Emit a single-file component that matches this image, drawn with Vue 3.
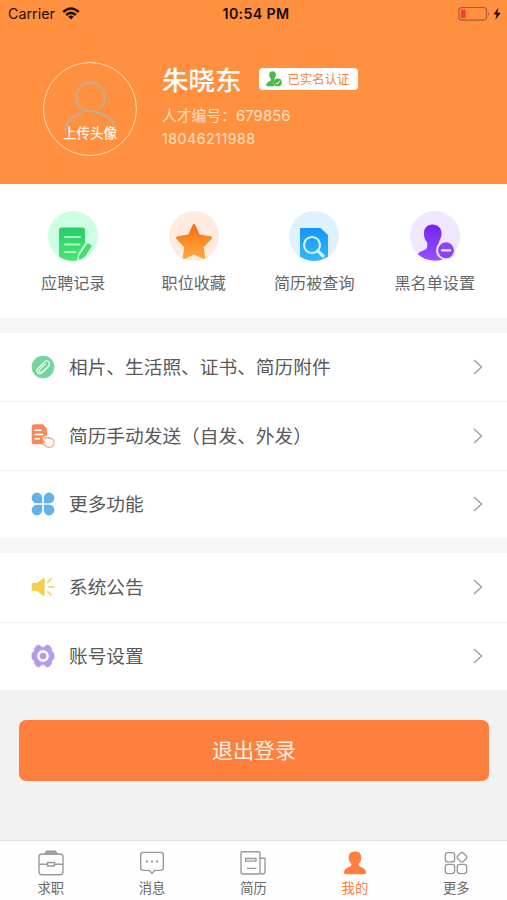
<script setup>
const shortcuts = [
  { id: 'records', label: '应聘记录' },
  { id: 'favorites', label: '职位收藏' },
  { id: 'viewed', label: '简历被查询' },
  { id: 'blacklist', label: '黑名单设置' },
]
const groups = [
  [
    { id: 'clip', label: '相片、生活照、证书、简历附件' },
    { id: 'send', label: '简历手动发送（自发、外发）' },
    { id: 'features', label: '更多功能' },
  ],
  [
    { id: 'notice', label: '系统公告' },
    { id: 'settings', label: '账号设置' },
  ],
]
const tabs = [
  { id: 'jobs', label: '求职' },
  { id: 'messages', label: '消息' },
  { id: 'resume', label: '简历' },
  { id: 'mine', label: '我的', active: true },
  { id: 'more', label: '更多' },
]
</script>

<template>
  <div class="screen">
    <header class="hero">
      <div class="status">
        <div class="carrier">
          <span>Carrier</span>
          <svg width="18" height="13" viewBox="0 0 18 13" fill="none" stroke="#241208" stroke-width="2.5">
            <path d="M1.2 5Q9-2 16.8 5M4.1 8Q9 3.7 13.9 8" />
            <path d="M6.2 9.7Q9 7.3 11.8 9.7L9 12.5Z" fill="#241208" stroke="none" />
          </svg>
        </div>
        <div class="clock">10:54 PM</div>
        <div class="power">
          <svg width="44" height="15" viewBox="0 0 44 15">
            <rect x=".7" y=".4" width="27.8" height="12.8" rx="3.2" fill="none" stroke="#a9602e" stroke-width="1.2" />
            <rect x="2.7" y="2.4" width="5" height="8.8" rx="1.2" fill="#fb3b3b" />
            <path d="M30 4.5Q32 6.8 30 9.1Z" fill="#a9602e" />
            <path d="M40.4 .7L35.5 7.5H38.6L37.2 13L42.8 5.7H39.5Z" fill="#1c0e05" />
          </svg>
        </div>
      </div>
      <div class="profile">
        <div class="avatar">
          <svg class="person" width="54" height="54" viewBox="0 0 54 54" fill="none" stroke="#bfae92" stroke-width="2">
            <path d="M36.4 26.1A14.3 14.3 0 1 0 27 29.2C39 29.2 48 36 51.5 44.5V50M19 30.8C10 33 2.5 40.5 2.5 50" />
          </svg>
          <span class="upload">上传头像</span>
        </div>
        <div class="identity">
          <div class="name-row">
            <span class="name">朱晓东</span>
            <span class="verified">
              <svg width="16" height="16" viewBox="0 0 16 16">
                <path d="M6.5.3C9 .3 10.2 2 9.8 4.6C9.6 6 9 6.8 8.5 7.5V9.4C7.3 11 7.6 13 9 15.3H.3C.1 12 1.4 11 4.8 9.8V7.7C3.5 6.4 3.2 5.3 3.3 3.5C3.4 1.3 4.5.3 6.5.3Z" fill="#49b94b" />
                <circle cx="11.9" cy="11.4" r="3.9" fill="#49b94b" />
                <path d="M9.9 11.7L11.3 13L14 9.9" fill="none" stroke="#fff" stroke-width="1" />
              </svg>
              <span class="verified-text">已实名认证</span>
            </span>
          </div>
          <div class="meta">人才编号：<span class="num">679856</span></div>
          <div class="phone">18046211988</div>
        </div>
      </div>
    </header>

    <nav class="shortcuts">
      <div v-for="s in shortcuts" :key="s.id" class="shortcut">
        <svg v-if="s.id === 'records'" width="50" height="50" viewBox="0 0 50 50">
          <defs>
            <linearGradient id="green" x2="0" y2="1"><stop stop-color="#27ce69" /><stop offset="1" stop-color="#4be673" /></linearGradient>
            <clipPath id="disc"><circle cx="25" cy="25" r="25" /></clipPath>
          </defs>
          <circle cx="25" cy="25" r="25" fill="#ccffe2" />
          <g clip-path="url(#disc)">
            <path d="M14 16.4H34Q37 16.4 37 19.4V32L30 43V50H11V19.4Q11 16.4 14 16.4Z" fill="url(#green)" />
            <path d="M17 26H32M17 33.5H31.5M17 41H27.5" stroke="#b4f7cb" stroke-width="1.9" stroke-linecap="round" />
          </g>
          <path d="M38.3 33Q39.5 31 41.5 32.2L43 33.2Q45 34.5 43.7 36.3L37.5 46Q34.5 48.8 29.5 49.3L31 43.5Z" fill="#4adc6f" stroke="#ccffe2" stroke-width="1.2" />
        </svg>
        <svg v-else-if="s.id === 'favorites'" width="50" height="50" viewBox="0 0 50 50">
          <defs><linearGradient id="orange" x2="0" y2="1"><stop stop-color="#f66d16" /><stop offset=".55" stop-color="#fa922b" /><stop offset="1" stop-color="#ffa540" /></linearGradient></defs>
          <circle cx="25" cy="25" r="25" fill="#ffebdf" />
          <path d="M25 14.4L29.8 24.5L41.8 26.8L33.4 35.8L35 46.8L25 42L15 46.8L16.6 35.8L8.2 26.8L20.2 24.5Z" fill="url(#orange)" stroke="url(#orange)" stroke-width="2.5" stroke-linejoin="round" />
        </svg>
        <svg v-else-if="s.id === 'viewed'" width="50" height="50" viewBox="0 0 50 50">
          <defs><linearGradient id="blue" x2="0" y2="1"><stop stop-color="#1895fb" /><stop offset="1" stop-color="#32b8fb" /></linearGradient></defs>
          <circle cx="25" cy="25" r="25" fill="#def1ff" />
          <g clip-path="url(#disc)">
            <path d="M11 17H31.5L39 24V50H11Z" fill="url(#blue)" />
            <circle cx="23" cy="34" r="8" fill="none" stroke="#d8f2ff" stroke-width="2.2" />
            <path d="M28.8 39.8L34 45" stroke="#d8f2ff" stroke-width="3.2" stroke-linecap="round" />
          </g>
        </svg>
        <svg v-else width="50" height="50" viewBox="0 0 50 50">
          <defs><linearGradient id="violet" x2="0" y2="1"><stop stop-color="#7224ef" /><stop offset="1" stop-color="#9a50ff" /></linearGradient></defs>
          <circle cx="25" cy="25" r="25" fill="#f0e6ff" />
          <path d="M22.5 13.5C28 13.5 31.5 17 31.5 22.5C31.7 26 30 28.5 28.8 31.5V36C28.8 39 34 40.5 34.5 47.7C30 50.2 17 51.3 8 43.5C8.2 39.5 17.2 40.2 17.2 35.5V31.5C14.8 29 14 26 14 22.5C14 17 17 13.5 22.5 13.5Z" fill="url(#violet)" />
          <circle cx="36" cy="39.3" r="9" fill="#8a45fa" stroke="#f0e6ff" stroke-width="2" />
          <path d="M31.8 39.3H40.2" stroke="#f0e6ff" stroke-width="2.2" stroke-linecap="round" />
        </svg>
        <span>{{ s.label }}</span>
      </div>
    </nav>

    <section v-for="(group, i) in groups" :key="i" class="group">
      <div v-for="item in group" :key="item.id" class="row">
        <svg v-if="item.id === 'clip'" class="icon" viewBox="0 0 24 24">
          <circle cx="12" cy="12" r="11.3" fill="#74d49d" />
          <path d="M17.5 11.5L11.7 17.2C7.5 20.8 3.8 16.5 7.3 13L13.5 7C16.8 4.2 20.2 8 17.3 11L11.5 16.6C9 18.5 6.9 16 9.1 14L14.3 9" fill="none" stroke="#e4faed" stroke-width="1.3" stroke-linecap="round" />
        </svg>
        <svg v-else-if="item.id === 'send'" class="icon" viewBox="0 0 24 24">
          <path d="M3 .2H12L16 4.7V12L12 12.5L13 20.2H3Q.7 20.2.7 17.7V2.7Q.7.2 3 .2Z" fill="#fb8958" />
          <path d="M4 6.2H10M4 10.5H12M4 14.8H8.5" stroke="#fff" stroke-width="1.4" stroke-linecap="round" />
          <path d="M10.8 13.3C11.4 11.9 13 12.4 14.8 14.8C15.5 12.5 17 13.7 17.3 14.4C18.2 12.8 19.8 13.5 20 14.8C22.6 14.5 23.8 18 22.5 20.8C21 24 16.5 24.1 14.6 21.6L11.9 20.2C10.8 19.2 12.2 18.1 13.5 18.4Z" fill="#fff" stroke="#ffa27b" stroke-width="1.3" stroke-linejoin="round" />
        </svg>
        <svg v-else-if="item.id === 'features'" class="icon" viewBox="0 0 24 24" fill="#62b0ec">
          <path d="M11.2 11.2H6A5.3 5.3 0 1 1 11.2 6ZM12.8 11.2V6A5.3 5.3 0 1 1 18 11.2ZM11.2 12.8V18A5.3 5.3 0 1 1 6 12.8ZM12.8 12.8H18A5.3 5.3 0 1 1 12.8 18Z" />
        </svg>
        <svg v-else-if="item.id === 'notice'" class="icon" viewBox="0 0 24 24">
          <path d="M1.7 8H6L11.7 3.4Q13.7 2.5 13.7 4.5V19.8Q13.5 21.7 11.7 20.5L6 16H1.7Q.7 16 .7 15V9Q.7 8 1.7 8Z" fill="#f4d04d" />
          <path d="M16.8 7.3L20 4M18.2 12H22.5M16.8 16.7L20 20" stroke="#f6d864" stroke-width="1.8" stroke-linecap="round" />
        </svg>
        <svg v-else class="icon" viewBox="0 0 24 24">
          <path d="M5.5 1.8L8.6 1Q9.6 3.4 12 3.4Q14.4 3.4 15.4 1L18.5 1.8L20.5 4.5Q19.7 7.5 23 9.2V14.8Q19.7 16.5 20.5 19.5L18.5 22.2L15.4 23Q14.4 20.6 12 20.6Q9.6 20.6 8.6 23L5.5 22.2L3.5 19.5Q4.3 16.5 1 14.8V9.2Q4.3 7.5 3.5 4.5Z" fill="#b49aeb" stroke="#b49aeb" stroke-width=".7" stroke-linejoin="round" />
          <circle cx="12" cy="12" r="4.6" fill="#b49aeb" stroke="#fff" stroke-width="2.6" />
        </svg>
        <span class="row-label">{{ item.label }}</span>
        <svg class="chevron" width="10" height="16" viewBox="0 0 10 16"><path d="M1 1L8.5 8L1 15" fill="none" stroke="#a0a0a0" stroke-width="1.4" /></svg>
      </div>
    </section>

    <main class="actions"><button class="logout">退出登录</button></main>

    <nav class="tabs">
      <div v-for="t in tabs" :key="t.id" class="tab" :class="{ active: t.active }">
        <svg width="26" height="26" viewBox="0 0 26 26" fill="none" stroke="#999" stroke-width="1.35" stroke-linejoin="round">
          <template v-if="t.id === 'jobs'">
            <rect x="1" y="4" width="24" height="20.7" rx="3" />
            <path d="M1 14.2H9.5M16.5 14.2H25M9.5 12.5H16.5V16H9.5Z" />
            <path d="M7 4L8.5 1.2H17.5L19 4Z" fill="#aaa" />
          </template>
          <template v-else-if="t.id === 'messages'">
            <path d="M4 2.3H22Q24.3 2.3 24.3 4.6V18Q24.3 20.3 22 20.3H16L13 23.2L10 20.3H4Q1.7 20.3 1.7 18V4.6Q1.7 2.3 4 2.3Z" />
            <path d="M7 11.5H9M12 11.5H14M17 11.5H19" stroke-width="2" />
          </template>
          <template v-else-if="t.id === 'resume'">
            <path d="M20 24H3Q1 24 1 22V3.5Q1 1.7 3 1.7H18Q20 1.7 20 3.5V22Q20 24 22.2 24Q25 24 25 21.5V8.2H20M7 18.3H16.5" />
            <rect x="5.5" y="8.5" width="10.5" height="2.6" />
          </template>
          <path v-else-if="t.id === 'mine'" d="M13 1.6C18 1.6 20.2 5 19 10C18.5 12 17.5 13 16.7 14V15.3C18 17.5 23.8 17.5 24 22.3Q24 24.2 22.5 24.2H3.5Q2 24.2 2 22.3C2.2 17.5 8 17.5 9.3 15.3V14C8.5 13 7.5 12 7 10C5.8 5 8 1.6 13 1.6Z" fill="#fd8041" stroke="none" />
          <template v-else>
            <rect x="2.3" y="2.6" width="9.3" height="9.3" rx="2.5" />
            <rect x="2.3" y="14.3" width="9.3" height="9.3" rx="2.5" />
            <rect x="14.3" y="14.3" width="9.3" height="9.3" rx="2.5" />
            <path d="M17.7 3Q19 1.7 20.3 3L23.5 6.2Q24.5 7.3 23.5 8.4L20.3 11.6Q19 12.8 17.7 11.6L14.5 8.4Q13.5 7.3 14.5 6.2Z" />
          </template>
        </svg>
        <span>{{ t.label }}</span>
      </div>
    </nav>
  </div>
</template>

<style>
body { margin: 0; background: #f2f2f2; }
</style>

<style scoped>
.screen { width: 507px; height: 900px; display: flex; flex-direction: column; overflow: hidden; background: #f2f2f2; color: #666; font-family: Inter, "Noto Sans CJK SC", sans-serif; box-sizing: border-box; }
svg { display: block; flex-shrink: 0; }
.hero { height: 184px; background: #ff9040; flex-shrink: 0; }
.status { height: 28px; padding: 0 5px 0 8px; display: grid; grid-template-columns: 1fr auto 1fr; align-items: center; color: #241208; font-size: 14.3px; line-height: 28px; }
.carrier { display: flex; align-items: center; gap: 7px; }
.carrier svg { margin-bottom: 2px; }
.clock { font-weight: 600; font-size: 14.2px; letter-spacing: .35px; padding-left: 2px; color: #160b04; }
.power { display: flex; justify-content: flex-end; }
.profile { display: flex; padding: 34px 0 0 43px; gap: 25px; }
.avatar { position: relative; box-sizing: border-box; width: 94px; height: 94px; border: 1.5px solid #ffd9b4; border-radius: 50%; display: flex; justify-content: center; }
.person { margin-top: 19px; }
.upload { position: absolute; top: 60px; left: 0; width: 100%; text-align: center; font-size: 13.5px; line-height: 20px; font-weight: 500; color: #fff5e9; }
.name-row { height: 34px; display: flex; align-items: center; gap: 17px; }
.name { font-size: 26.5px; line-height: 34px; padding-top: 2px; font-weight: 500; color: #fff; }
.verified { box-sizing: border-box; width: 99px; height: 22px; padding-left: 7px; border-radius: 4px; background: #fff; display: flex; align-items: center; gap: 6px; color: #f38448; font-size: 12.4px; line-height: 20px; white-space: nowrap; }
.verified-text { padding-top: 1px; }
.meta { margin-top: 9px; color: #ffe0c3; font-size: 14.8px; line-height: 23px; }
.num { letter-spacing: .1px; }
.phone { color: #ffe0c3; font-size: 14.2px; line-height: 22px; letter-spacing: .5px; }
.shortcuts { box-sizing: border-box; height: 134px; flex-shrink: 0; padding: 27px 12px 0 13px; display: grid; grid-template-columns: repeat(4, 1fr); background: #fff; }
.shortcut { display: flex; flex-direction: column; align-items: center; gap: 10px; font-size: 16.1px; line-height: 24px; white-space: nowrap; }
.group { border-top: 15px solid #f6f6f6; background: #fff; flex-shrink: 0; }
.row { box-sizing: border-box; height: 68.4px; display: flex; align-items: center; padding: 0 24px 0 31px; }
.row + .row { border-top: 1.5px solid #f0f0f0; }
.icon { width: 24px; height: 24px; margin-right: 14px; }
.row-label { flex: 1; padding-top: 2px; color: #595959; font-size: 18.7px; line-height: 28px; white-space: nowrap; }
.actions { flex: 1; padding: 30px 18px 0 19px; }
.logout { display: block; width: 100%; height: 61px; padding: 0; border: 0; border-radius: 7px; background: #ff7f3e; color: #fff0e1; font: 400 21px/61px Inter, "Noto Sans CJK SC", sans-serif; }
.tabs { box-sizing: border-box; height: 60px; flex-shrink: 0; display: grid; grid-template-columns: repeat(5, 1fr); padding-top: 9px; border-top: 1.5px solid #dedede; background: #fefefe; }
.tab { display: flex; flex-direction: column; align-items: center; gap: 3px; color: #666; font-size: 13.3px; line-height: 19px; }
.tab.active { color: #ff7f3e; }
</style>
